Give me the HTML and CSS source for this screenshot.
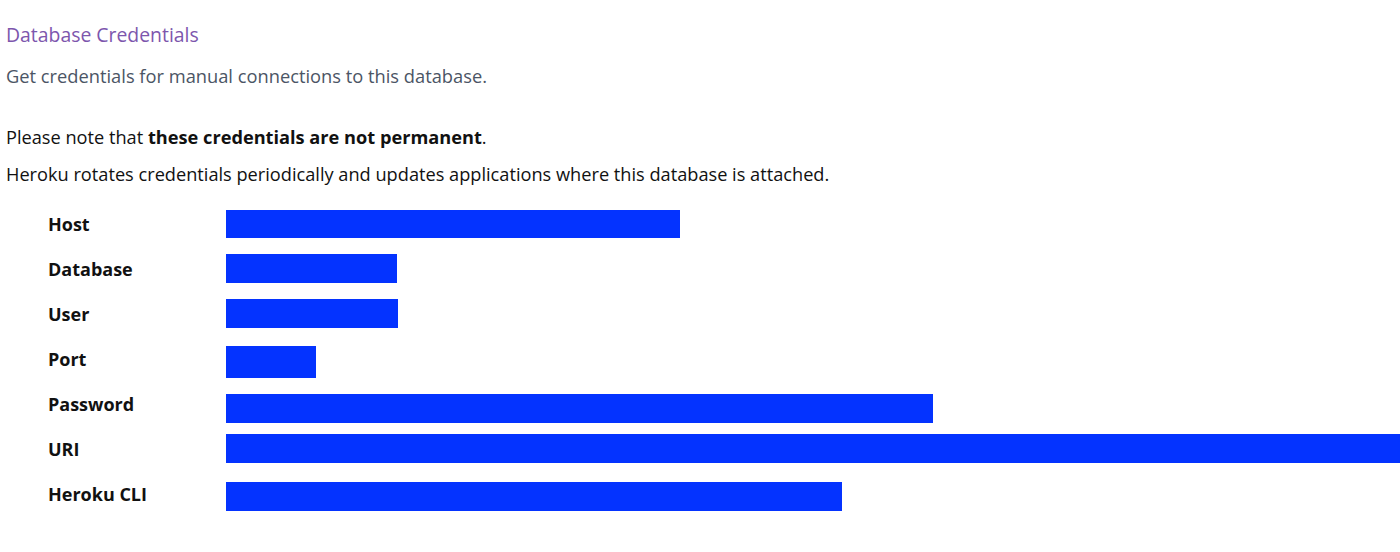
FILE: index.html
```html
<!DOCTYPE html>
<html lang="en">
<head>
<meta charset="utf-8">
<title>Database Credentials</title>
<link rel="stylesheet" href="styles.css">
</head>
<body>
<main class="panel">
  <h2 class="title">Database Credentials</h2>
  <p class="subtitle">Get credentials for manual connections to this database.</p>
  <div class="note">
    <p>Please note that <strong>these credentials are not permanent</strong>.</p>
    <p>Heroku rotates credentials periodically and updates applications where this database is attached.</p>
  </div>
  <dl class="creds">
    <div class="row"><dt>Host</dt><dd><span class="bar bar-short" style="width:454px"></span></dd></div>
    <div class="row"><dt>Database</dt><dd><span class="bar" style="width:171px"></span></dd></div>
    <div class="row"><dt>User</dt><dd><span class="bar" style="width:172px"></span></dd></div>
    <div class="row"><dt>Port</dt><dd><span class="bar bar-tall shift-3" style="width:90px"></span></dd></div>
    <div class="row"><dt>Password</dt><dd><span class="bar shift-4" style="width:707px"></span></dd></div>
    <div class="row"><dt>URI</dt><dd><span class="bar" style="width:1174px"></span></dd></div>
    <div class="row"><dt>Heroku CLI</dt><dd><span class="bar shift-2" style="width:616px"></span></dd></div>
  </dl>
</main>
</body>
</html>
```
FILE: styles.css
```css
* { box-sizing: border-box; }
html, body { margin: 0; padding: 0; background: #fff; }
body {
  font-family: "Open Sans", "Noto Sans", sans-serif;
  color: #111;
  overflow: hidden;
}
.panel { padding: 23px 0 0 6px; }
.title {
  margin: 0;
  font-size: 19.4px;
  font-weight: 400;
  line-height: 24px;
  color: #7d56ad;
}
.subtitle {
  margin: 17px 0 0;
  font-size: 18.3px;
  line-height: 24px;
  color: #4b5565;
}
.note { margin-top: 37px; }
.note p {
  margin: 0 0 13px;
  font-size: 18.2px;
  line-height: 24px;
  color: #111;
}
.note strong { font-weight: 700; }
.creds { margin: 15px 0 0; padding: 0 0 0 42px; }
.row {
  display: grid;
  grid-template-columns: 178px 1fr;
  align-items: center;
  height: 45px;
}
.row dt {
  font-size: 18px;
  font-weight: 700;
  color: #111;
}
.row dd { margin: 0; display: flex; align-items: center; }
.bar {
  display: block;
  height: 29px;
  background: #0433ff;
}
.bar-short { height: 28px; }
.bar-tall { height: 32px; }
.shift-2 { margin-top: 5px; }
.shift-3 { margin-top: 6px; }
.shift-4 { margin-top: 9px; }
```
